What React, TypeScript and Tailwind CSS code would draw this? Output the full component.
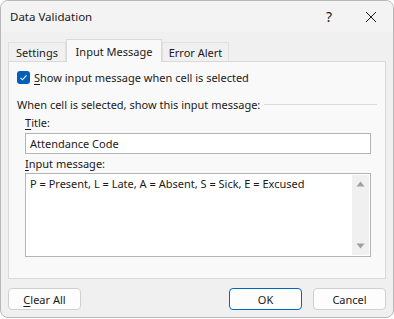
import React from 'react'

function Tab({ label, active, w }: { label: string; active?: boolean; w: string }) {
  if (active) {
    return (
      <div className={'h-[23px] flex items-center justify-center bg-[#f9f9f9] border border-b-0 border-[#d9d9d9] -mb-px z-10 relative text-[#1a1a1a] ' + w}>
        {label}
      </div>
    )
  }
  return (
    <div className={'h-[19px] flex items-center justify-center bg-[#f0f0f0] border border-b-0 border-[#e0e0e0] text-[#1a1a1a] ' + w}>
      {label}
    </div>
  )
}

function Button({ children, primary }: { children: React.ReactNode; primary?: boolean }) {
  return (
    <div
      className={
        'w-[73px] h-[22px] rounded-[4px] bg-[#fdfdfd] flex items-center justify-center text-[#1a1a1a] ' +
        (primary ? 'border border-[#0067c0]' : 'border border-[#d0d0d0]')
      }
    >
      {children}
    </div>
  )
}

export default function App() {
  return (
    <div className="w-[394px] h-[319px] bg-white" style={{ fontFamily: '"Noto Sans", "Open Sans", sans-serif' }}>
      <div className="w-[394px] h-[318px] rounded-[8px] border border-[#b8b8b8] bg-[#f0f0f0] overflow-hidden flex flex-col text-[11px] leading-none">
        {/* title bar */}
        <div className="h-[31px] bg-[#f3f3f3] flex items-center pl-[9px] pr-[12px] shrink-0">
          <span className="text-[#1a1a1a] text-[11.5px]">Data Validation</span>
          <span className="ml-auto text-[14px] text-[#1a1a1a] mr-[33px]">?</span>
          <svg width="12" height="12" viewBox="0 0 12 12" className="mr-[4px]">
            <path d="M1 1 L11 11 M11 1 L1 11" stroke="#1a1a1a" strokeWidth="1" />
          </svg>
        </div>

        <div className="flex flex-col px-[7px] pt-[6px]">
          {/* tabs */}
          <div className="flex items-end h-[23px]">
            <Tab label="Settings" w="w-[58px]" />
            <Tab label="Input Message" active w="w-[96px]" />
            <Tab label="Error Alert" w="w-[67px]" />
          </div>

          {/* panel */}
          <div className="h-[218px] bg-[#f9f9f9] border border-[#d9d9d9] flex flex-col px-[8px] pt-[9px]">
            <div className="flex items-center gap-[4px] h-[13px]">
              <div className="w-[13px] h-[13px] rounded-[3px] bg-[#005fb8] flex items-center justify-center">
                <svg width="9" height="9" viewBox="0 0 9 9">
                  <path d="M1.5 4.8 L3.5 6.8 L7.5 2.3" stroke="white" strokeWidth="1.1" fill="none" />
                </svg>
              </div>
              <span className="text-[#1a1a1a]">
                <span className="underline underline-offset-2">S</span>how input message when cell is selected
              </span>
            </div>

            <div className="flex items-center gap-[4px] mt-[14px] h-[12px]">
              <span className="text-[#1a1a1a] whitespace-nowrap">When cell is selected, show this input message:</span>
              <div className="flex-1 h-px bg-[#dcdcdc]" />
            </div>

            <div className="pl-[8px] pr-[6px] flex flex-col">
              <div className="mt-[7px] h-[12px] text-[#1a1a1a]">
                <span className="underline underline-offset-2">T</span>itle:
              </div>
              <div className="mt-[4px] h-[21px] bg-white border border-[#b4b4b4] flex items-center px-[4px] text-[#1a1a1a]">
                Attendance Code
              </div>
              <div className="mt-[4px] h-[12px] text-[#1a1a1a]">
                <span className="underline underline-offset-2">I</span>nput message:
              </div>
              <div className="mt-[3px] h-[84px] bg-white border border-[#b4b4b4] flex">
                <div className="flex-1 px-[4px] pt-[4px] text-[#1a1a1a]">
                  P = Present, L = Late, A = Absent, S = Sick, E = Excused
                </div>
                <div className="w-[17px] my-[1px] mr-[1px] bg-[#f0f0f0] flex flex-col items-center justify-between py-[6px]">
                  <svg width="9" height="6" viewBox="0 0 9 6">
                    <path d="M0.5 5.5 L4.5 0.5 L8.5 5.5 Z" fill="#a0a0a0" />
                  </svg>
                  <svg width="9" height="6" viewBox="0 0 9 6">
                    <path d="M0.5 0.5 L4.5 5.5 L8.5 0.5 Z" fill="#a0a0a0" />
                  </svg>
                </div>
              </div>
            </div>
          </div>

          {/* buttons */}
          <div className="flex items-center mt-[9px] gap-[11px]">
            <Button>
              <span>
                <span className="underline underline-offset-2">C</span>lear All
              </span>
            </Button>
            <div className="flex-1" />
            <Button primary>OK</Button>
            <Button>Cancel</Button>
          </div>
        </div>
      </div>
    </div>
  )
}
